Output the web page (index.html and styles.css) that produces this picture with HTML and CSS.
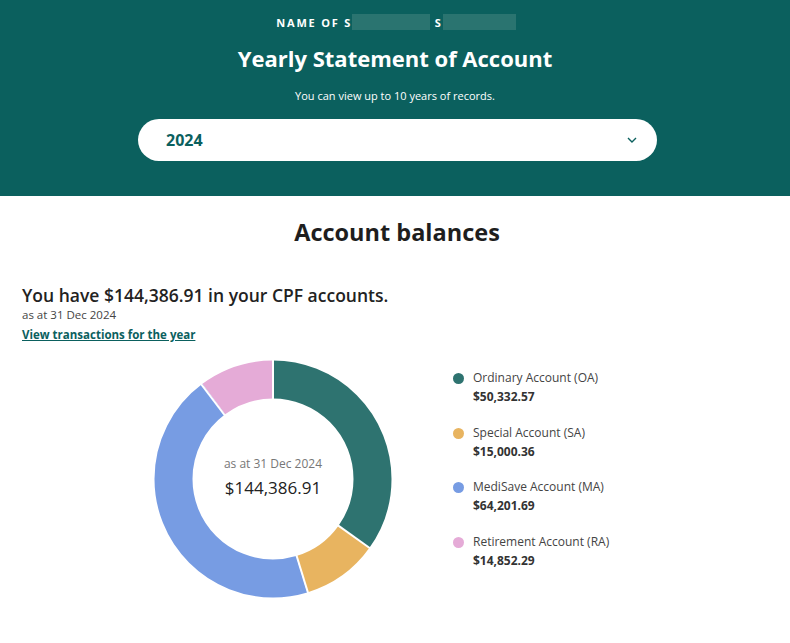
FILE: index.html
```html
<!DOCTYPE html>
<html lang="en">

<head>
  <meta charset="UTF-8" />
  <title>Yearly Statement of Account</title>
  <link rel="stylesheet" href="styles.css">
</head>

<body>
  <!-- 顶部 -->
  <div class="banner">
    <p class="holder">NAME OF S<span class="mask mask-a"></span> S<span class="mask mask-b"></span></p>
    <h1>Yearly Statement of Account</h1>
    <p class="sub">You can view up to 10 years of records.</p>
    <div class="picker">
      <span>2024</span>
      <svg width="10" height="6" viewBox="0 0 10 6"><path d="M1 1 L5 5 L9 1" fill="none" stroke="#0b605e" stroke-width="1.4" /></svg>
    </div>
  </div>

  <!-- 余额 -->
  <div class="balances">
    <h2>Account balances</h2>
    <p class="total">You have $144,386.91 in your CPF accounts.</p>
    <p class="asat">as at 31 Dec 2024</p>
    <a class="link" href="#">View transactions for the year</a>

    <div class="chart-row">
      <div class="donut">
        <svg width="240" height="240" viewBox="-120 -120 240 240">
          <g transform="rotate(-90)" fill="none" stroke-width="38">
            <circle r="99.5" stroke="#2e7370" stroke-dasharray="217.9 625.2" stroke-dashoffset="0" />
            <circle r="99.5" stroke="#e8b460" stroke-dasharray="64.96 625.2" stroke-dashoffset="-217.9" />
            <circle r="99.5" stroke="#779ce3" stroke-dasharray="277.98 625.2" stroke-dashoffset="-282.86" />
            <circle r="99.5" stroke="#e5abd7" stroke-dasharray="64.33 625.2" stroke-dashoffset="-560.84" />
          </g>
          <g stroke="#fff" stroke-width="2">
            <line x1="0" y1="-79" x2="0" y2="-120" />
            <line x1="64.3" y1="45.9" x2="97.7" y2="69.7" />
            <line x1="23.2" y1="75.5" x2="35.3" y2="114.7" />
            <line x1="-47.7" y1="-63" x2="-72.4" y2="-95.7" />
          </g>
        </svg>
        <div class="donut-text">
          <p class="donut-date">as at 31 Dec 2024</p>
          <p class="donut-sum">$144,386.91</p>
        </div>
      </div>

      <ul class="legend">
        <li><i class="dot oa"></i>
          <div><p class="name">Ordinary Account (OA)</p><p class="amt">$50,332.57</p></div>
        </li>
        <li><i class="dot sa"></i>
          <div><p class="name">Special Account (SA)</p><p class="amt">$15,000.36</p></div>
        </li>
        <li><i class="dot ma"></i>
          <div><p class="name">MediSave Account (MA)</p><p class="amt">$64,201.69</p></div>
        </li>
        <li><i class="dot ra"></i>
          <div><p class="name">Retirement Account (RA)</p><p class="amt">$14,852.29</p></div>
        </li>
      </ul>
    </div>
  </div>
</body>

</html>
```

FILE: styles.css
```css
* {
  margin: 0;
  padding: 0;
  box-sizing: border-box;
}

body {
  font-family: "Open Sans", "Liberation Sans", sans-serif;
  color: #222;
  background: #fff;
}

ul {
  list-style: none;
}

.banner {
  background: #0b605e;
  height: 196px;
  padding-top: 14px;
  color: #fff;
  text-align: center;
}

.banner .holder {
  font-size: 11px;
  font-weight: 700;
  letter-spacing: 1.8px;
  height: 17px;
  line-height: 17px;
  padding-left: 2px;
}

.mask {
  display: inline-block;
  height: 16px;
  vertical-align: top;
  background: #2a7470;
}

.mask-a {
  width: 78px;
}

.mask-b {
  width: 73px;
}

.banner h1 {
  margin-top: 12px;
  font-size: 22px;
  font-weight: 700;
  line-height: 30px;
}

.banner .sub {
  margin-top: 15px;
  font-size: 11px;
  line-height: 16px;
}

.picker {
  width: 519px;
  height: 42px;
  margin: 15px auto 0 138px;
  background: #fff;
  border-radius: 21px;
  display: flex;
  align-items: center;
  justify-content: space-between;
  padding: 0 20px 0 28px;
  color: #0b605e;
  font-size: 16px;
  font-weight: 700;
}

.balances {
  padding: 21px 22px 0;
}

.balances h2 {
  text-align: center;
  font-size: 23.5px;
  font-weight: 700;
  line-height: 30px;
  color: #1e1e1e;
  padding-left: 4px;
}

.total {
  margin-top: 36px;
  font-size: 17.5px;
  font-weight: 600;
  line-height: 24px;
}

.asat {
  font-size: 11.5px;
  color: #444;
  line-height: 15px;
}

.link {
  display: inline-block;
  margin-top: 3px;
  font-size: 11.5px;
  font-weight: 700;
  color: #0b605e;
  line-height: 15px;
}

.chart-row {
  display: flex;
  margin-top: 15px;
}

.donut {
  position: relative;
  width: 240px;
  height: 240px;
  margin-left: 131px;
}

.donut svg {
  display: block;
}

.donut-text {
  position: absolute;
  inset: 0;
  display: flex;
  flex-direction: column;
  align-items: center;
  justify-content: center;
  padding-bottom: 4px;
}

.donut-date {
  font-size: 12px;
  color: #777;
  line-height: 16px;
}

.donut-sum {
  margin-top: 5px;
  font-size: 17px;
  color: #222;
  line-height: 22px;
}

.legend {
  margin-left: 60px;
  margin-top: 10px;
}

.legend li {
  display: flex;
  align-items: flex-start;
  height: 54.5px;
}

.dot {
  width: 11px;
  height: 11px;
  border-radius: 50%;
  margin-top: 4px;
  margin-right: 9px;
}

.oa { background: #2e7370; }
.sa { background: #e8b460; }
.ma { background: #779ce3; }
.ra { background: #e5abd7; }

.legend .name {
  font-size: 12px;
  color: #444;
  line-height: 18px;
}

.legend .amt {
  font-size: 12px;
  font-weight: 700;
  color: #333;
  line-height: 20px;
}
```
